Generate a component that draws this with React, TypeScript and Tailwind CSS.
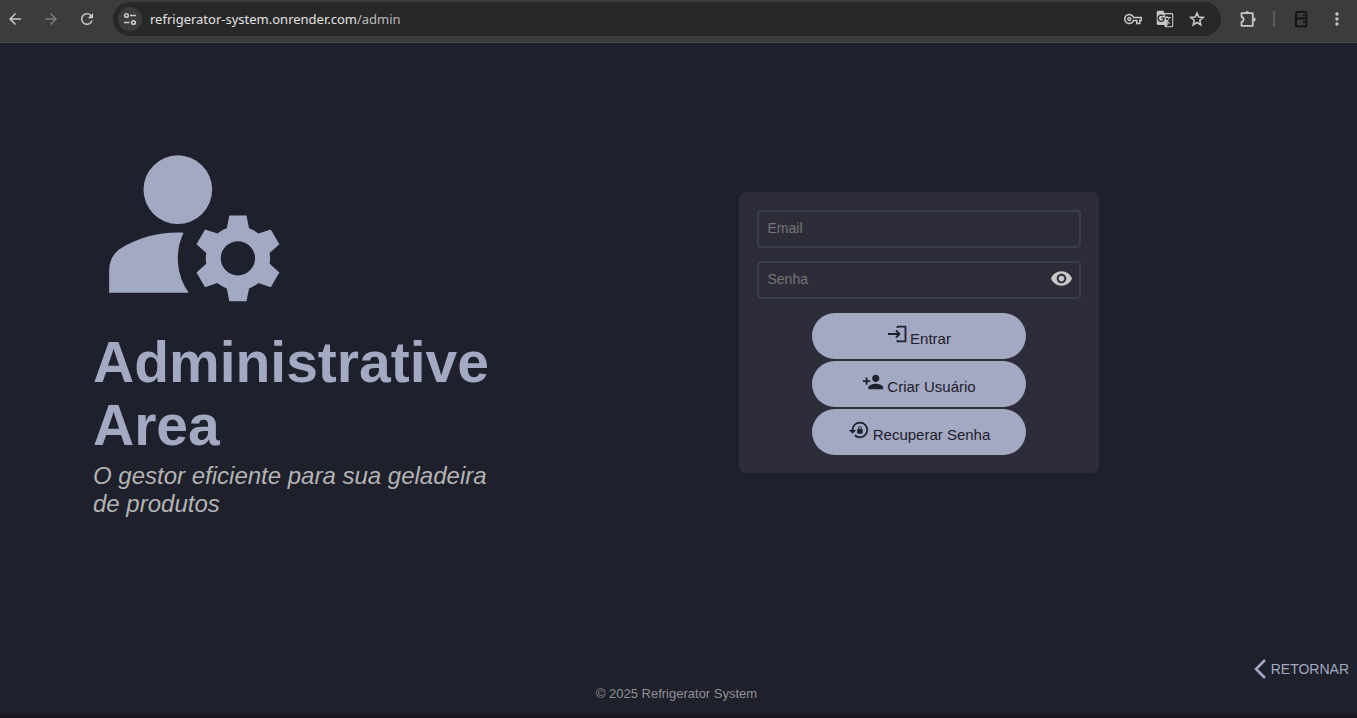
import { useState } from "react";
import type { ReactNode } from "react";
import { MdManageAccounts, MdVisibility, MdPersonAdd, MdLockReset, MdArrowBack, MdArrowForward, MdRefresh, MdOutlineVpnKey, MdGTranslate, MdMoreVert } from "react-icons/md";

function LoginIcon() {
  return (
    <svg width="20" height="20" viewBox="0 0 20 20" fill="none" stroke="currentColor" strokeWidth="1.8" strokeLinejoin="round" aria-hidden="true">
      <path d="M1 10h11.500M9 6.500 12.500 10 9 13.500M10.500 4V2.600h8v14.800h-8V16" />
    </svg>
  );
}

function TuneIcon() {
  return (
    <svg width="14" height="14" viewBox="0 0 14 14" fill="none" stroke="currentColor" strokeWidth="1.6" aria-hidden="true">
      <circle cx="3.500" cy="3.500" r="1.800" />
      <path d="M7 3.500h6M1 10.500h5.500" />
      <circle cx="10.500" cy="10.500" r="1.800" />
    </svg>
  );
}

function StarIcon() {
  return (
    <svg width="18" height="18" viewBox="0 0 18 18" fill="none" stroke="currentColor" strokeWidth="1.6" aria-hidden="true">
      <path d="m9 3 1.700 4.100 4.500.4-3.400 2.900 1 4.400L9 12.500l-3.800 2.300 1-4.400-3.400-2.900 4.500-.4z" />
    </svg>
  );
}

function PuzzleIcon() {
  return (
    <svg width="18" height="18" viewBox="0 0 18 18" aria-hidden="true">
      <path d="M2.500 3.200h11.300v12.600H2.500v-3.600a2.800 2.800 0 0 0 0-5.400z" fill="none" stroke="currentColor" strokeWidth="1.8" strokeLinejoin="round" />
      <path d="M6.200 3a1.900 1.900 0 0 1 3.800 0zM14.500 7.300a2.200 2.200 0 0 1 0 4.400z" fill="currentColor" />
    </svg>
  );
}

function FridgeIcon() {
  return (
    <svg width="14" height="18" viewBox="0 0 14 18" fill="none" stroke="currentColor" strokeWidth="1.8" aria-hidden="true">
      <rect x="2" y="1.800" width="10.400" height="14.600" rx="1" />
      <path d="M2 8.500h10M9 5.300h1.800M9 12h1.800" />
    </svg>
  );
}

function BrowserBar() {
  return (
    <header className="flex h-[43px] items-start border-b border-[#484848] bg-[#3c3c3c] pt-[2px] text-[#c7c7c7]">
      <nav aria-label="Browser" className="flex h-[34px] w-[113px] items-center gap-[18px] pl-[6px]">
        <button aria-label="Back"><MdArrowBack size={18} /></button>
        <button aria-label="Forward" className="text-[#7c7c7c]"><MdArrowForward size={18} /></button>
        <button aria-label="Reload"><MdRefresh size={18} /></button>
      </nav>
      <div className="flex h-[34px] flex-1 items-center rounded-full bg-[#282828] pr-[15px] pl-[5px]">
        <button aria-label="Site information" className="flex h-6 w-6 items-center justify-center rounded-full bg-[#3c3c3c]"><TuneIcon /></button>
        <p className="ml-2 flex-1 pt-px font-['Noto_Sans',sans-serif] text-[13px] text-[#e3e3e3]">refrigerator-system.onrender.com<span className="text-[#b9b9b9]">/admin</span></p>
        <div className="flex items-center gap-[14px]">
          <button aria-label="Passwords"><MdOutlineVpnKey size={18} /></button>
          <button aria-label="Translate"><MdGTranslate size={18} /></button>
          <button aria-label="Bookmark"><StarIcon /></button>
        </div>
      </div>
      <div className="flex h-[34px] w-[136px] items-center pl-[18px]">
        <button aria-label="Extensions"><PuzzleIcon /></button>
        <span className="ml-4 h-4 w-[2px] bg-[#5c5c5c]" />
        <button aria-label="Refrigerator" className="ml-[19px] text-[#111]"><FridgeIcon /></button>
        <button aria-label="Menu" className="ml-[19px]"><MdMoreVert size={20} /></button>
      </div>
    </header>
  );
}

function PillButton({ type = "button", icon, children }: { type?: "button" | "submit"; icon: ReactNode; children: ReactNode }) {
  return (
    <button type={type} className="flex h-[46px] w-[214px] items-center justify-center gap-[3px] rounded-full bg-[#a3a8c3] pl-px text-[15px] leading-5 text-[#1e202c]">
      <span className="mb-1">{icon}</span>
      <span className="mt-[5px]">{children}</span>
    </button>
  );
}

const field = "h-[38px] w-full rounded-[4px] border-2 border-[#3b3d4c] bg-transparent px-[9px] pb-[2px] text-[14px] text-[#c7c7c7] placeholder:text-[#757575] outline-none";

export default function App() {
  const [visible, setVisible] = useState(false);
  return (
    <div className="flex min-h-screen flex-col border-b-4 border-[#1a1823] bg-[#1e202c] font-['Liberation_Sans',sans-serif]">
      <BrowserBar />
      <main className="grid flex-1 grid-cols-[43%_1fr] pt-[78px]">
        <section className="pl-[93px]">
          <MdManageAccounts size={206} className="-ml-px text-[#a3a8c3]" />
          <h1 className="mt-[4px] w-[400px] text-[57px] leading-[63px] font-bold text-[#a3a8c3]">Administrative Area</h1>
          <p className="mt-[5px] w-[400px] text-[24px] leading-[28px] text-[#b3b3b3] italic">O gestor eficiente para sua geladeira de produtos</p>
        </section>
        <form className="mt-[71px] ml-[155px] flex h-[281px] w-[360px] flex-col items-center rounded-[7px] bg-[#2c2d38] px-[18px] pt-[18px]" onSubmit={(e) => e.preventDefault()}>
          <input type="email" aria-label="Email" placeholder="Email" className={field} />
          <div className="relative mt-[13px] w-full">
            <input type={visible ? "text" : "password"} aria-label="Senha" placeholder="Senha" className={field} />
            <button type="button" aria-label="Mostrar senha" onClick={() => setVisible(!visible)} className="absolute top-[6px] right-[8px] text-[#c7c7c7]"><MdVisibility size={23} /></button>
          </div>
          <div className="mt-[14px] flex flex-col gap-[2px]">
            <PillButton type="submit" icon={<LoginIcon />}>Entrar</PillButton>
            <PillButton icon={<MdPersonAdd size={22} />}>Criar Usuário</PillButton>
            <PillButton icon={<MdLockReset size={22} />}>Recuperar Senha</PillButton>
          </div>
        </form>
      </main>
      <footer className="pb-[12px]">
        <div className="flex justify-end pr-2">
          <a href="#" className="flex items-center gap-[5px] text-[14px] leading-5 text-[#a3a8c3]">
            <svg width="12" height="20" viewBox="0 0 12 20" fill="none" stroke="currentColor" strokeWidth="2.600" aria-hidden="true"><path d="M11 1 2 10l9 9" /></svg>
            RETORNAR
          </a>
        </div>
        <p className="mt-[7px] pr-1 text-center text-[13px] leading-4 text-[#919191]">© 2025 Refrigerator System</p>
      </footer>
    </div>
  );
}
